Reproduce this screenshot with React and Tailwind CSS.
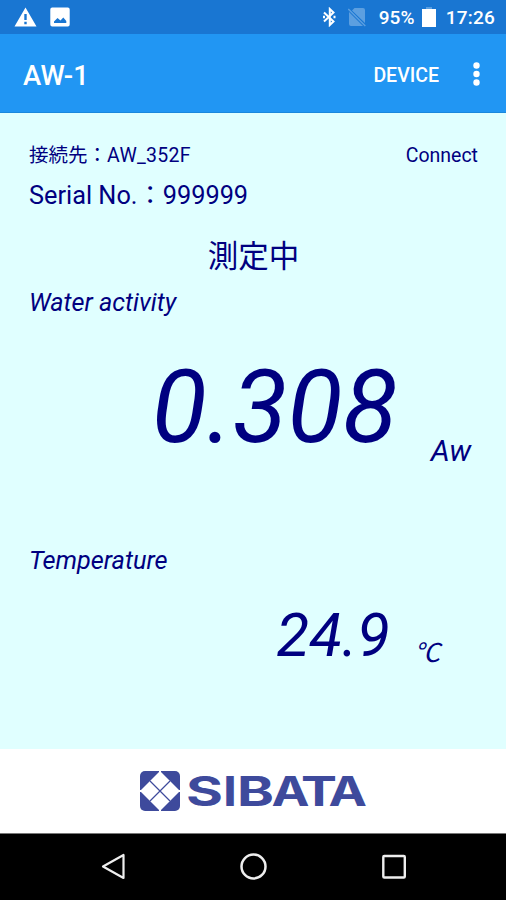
import React from "react";

const wordmark = [
  { letter: "S", x: 46, width: 37 },
  { letter: "I", x: 83, width: 14 },
  { letter: "B", x: 97, width: 37 },
  { letter: "A", x: 131.5, width: 38 },
  { letter: "T", x: 161, width: 36 },
  { letter: "A", x: 188.5, width: 38.5 },
];

function StatusBar() {
  return (
    <div className="flex h-[34px] items-center justify-between bg-[#1976d2] pl-[14px] pr-[11px] text-white">
      <div className="flex items-center gap-[13px]">
        <svg className="h-5 w-[23px]" viewBox="0 0 23 20" fill="currentColor">
          <path fillRule="evenodd" d="M11.5 0.5 22.5 19.5H0.5ZM10.3 7v6h2.4V7Zm0 7.8v2.4h2.4v-2.4Z" />
        </svg>
        <svg className="h-5 w-5" viewBox="0 0 20 20" fill="currentColor">
          <path fillRule="evenodd" d="M2.2 0.5h15.6q1.9 0 1.9 1.9v15.2q0 1.9-1.9 1.9H2.2Q.3 19.5.3 17.6V2.4Q.3.5 2.2.5ZM4 16h12.3v-2l-3-3.500-2.800 3-3-2.500L4 14.500Z" />
        </svg>
      </div>
      <div className="flex items-center">
        <svg className="mr-[12px] h-5 w-[14px]" viewBox="0 0 14 20" fill="none" stroke="currentColor" strokeWidth="2">
          <path d="M2 5.500 11.500 14.500 7.800 18V2L11.500 5.500 2 14.500" />
          <path d="M1 10h2M11.500 10h2" strokeWidth="2.400" />
        </svg>
        <svg className="mr-[13px] h-5 w-[18px]" viewBox="0 0 18 20" fill="#5c9fe0">
          <path d="M6.500 1H15q2 0 2 2v13L4 3.500ZM1 5l14 14H3q-2 0-2-2Z" />
          <path d="M.8 1.500 17.800 18.500l-1 1L-.2 2.500Z" />
        </svg>
        <span className="relative top-px w-[37px] whitespace-nowrap text-[19px] font-medium leading-5">95%</span>
        <svg className="ml-[6px] mr-[10px] h-5 w-[14px]" viewBox="0 0 14 20" fill="currentColor">
          <path d="M4 0h6v2H4z" fill="#5c9fe0" />
          <path d="M0 2h14v18H0z" />
        </svg>
        <span className="relative top-px whitespace-nowrap text-[19px] font-medium leading-5 tracking-[0.200px]">17:26</span>
      </div>
    </div>
  );
}

function AppBar() {
  return (
    <div className="flex h-[79px] items-center border-b border-[#1b87dc] bg-[#2196f3] pl-[23px] pr-[26px] pt-1 text-white">
      <h1 className="flex-1 pt-px text-[27.500px] font-medium leading-8">AW-1</h1>
      <span className="pt-px text-[19.500px] font-medium leading-6">DEVICE</span>
      <svg className="relative -top-px ml-[34px] h-6 w-[7px]" viewBox="0 0 7 24" fill="currentColor">
        <circle cx="3.500" cy="3.500" r="3.200" />
        <circle cx="3.500" cy="12" r="3.200" />
        <circle cx="3.500" cy="20.500" r="3.200" />
      </svg>
    </div>
  );
}

function Logo() {
  return (
    <svg className="h-[42px] w-[226px] overflow-visible" viewBox="0 0 226 42" fill="#3e4a9c">
      <rect x="0" y="1" width="40" height="40" rx="5" />
      <path d="M20 1 40 21 20 41 0 21Z" fill="#fff" />
      <path d="M10 11 30 31M30 11 10 31" stroke="#3e4a9c" strokeWidth="1.200" />
      <path d="M20 0v5M20 37v5M-.5 21h5M36 21h5" stroke="#fff" strokeWidth="2" />
      {wordmark.map((item, i) => (
        <text
          key={i}
          x={item.x}
          y="35.500"
          textLength={item.width}
          lengthAdjust="spacingAndGlyphs"
          className="font-['Inter'] text-[40.500px] font-bold"
        >
          {item.letter}
        </text>
      ))}
    </svg>
  );
}

function NavBar() {
  return (
    <div className="flex h-[67px] items-center justify-between border-t border-[#777] bg-black pl-[101px] pr-[100px]">
      <svg className="h-7 w-6" viewBox="0 0 24 28" fill="none" stroke="#eee" strokeWidth="2.200">
        <path d="M22.500 2v23L2 13.500Z" strokeLinejoin="round" />
      </svg>
      <svg className="h-7 w-7" viewBox="0 0 28 28" fill="none" stroke="#eee" strokeWidth="2.500">
        <circle cx="13.500" cy="13.500" r="12" />
      </svg>
      <svg className="h-7 w-6" viewBox="0 0 24 28" fill="none" stroke="#eee" strokeWidth="2.400">
        <rect x="1.300" y="3" width="21.500" height="21.500" rx="1" />
      </svg>
    </div>
  );
}

export default function App() {
  return (
    <div className="flex h-[900px] w-[506px] flex-col overflow-hidden bg-[#e0ffff] font-['Roboto','Noto_Sans_CJK_JP',sans-serif]">
      <StatusBar />
      <AppBar />

      <main className="flex flex-1 flex-col pl-[29px] pr-[28px] text-[#000080]">
        <div className="mt-[31px] flex h-6 justify-between text-[19.500px] leading-6">
          <span>
            接続先：<span className="tracking-[0.300px]">AW_352F</span>
          </span>
          <span>Connect</span>
        </div>
        <div className="mt-[12px] h-8 text-[25.300px] leading-8">Serial No.：999999</div>
        <div className="mt-[25px] h-10 text-center text-[30.500px] leading-10">測定中</div>
        <div className="mt-[10px] h-8 text-[25.200px] italic leading-8">Water activity</div>

        <div className="mt-[29px] flex h-[120px] items-baseline justify-end pr-[7px] italic">
          <span className="text-[101px] leading-[120px]">0.308</span>
          <span className="relative top-[19px] ml-[33px] text-[30px] leading-8">Aw</span>
        </div>

        <div className="mt-[77px] h-8 text-[25.300px] italic leading-8">Temperature</div>

        <div className="mt-[19px] flex h-20 items-baseline justify-end pr-[38px] italic">
          <span className="text-[60px] leading-[80px]">24.9</span>
          <span className="relative top-[6px] ml-[24px] text-[26px] leading-8">℃</span>
        </div>
      </main>

      <footer className="flex h-[84px] items-center justify-center bg-white">
        <Logo />
      </footer>
      <NavBar />
    </div>
  );
}
